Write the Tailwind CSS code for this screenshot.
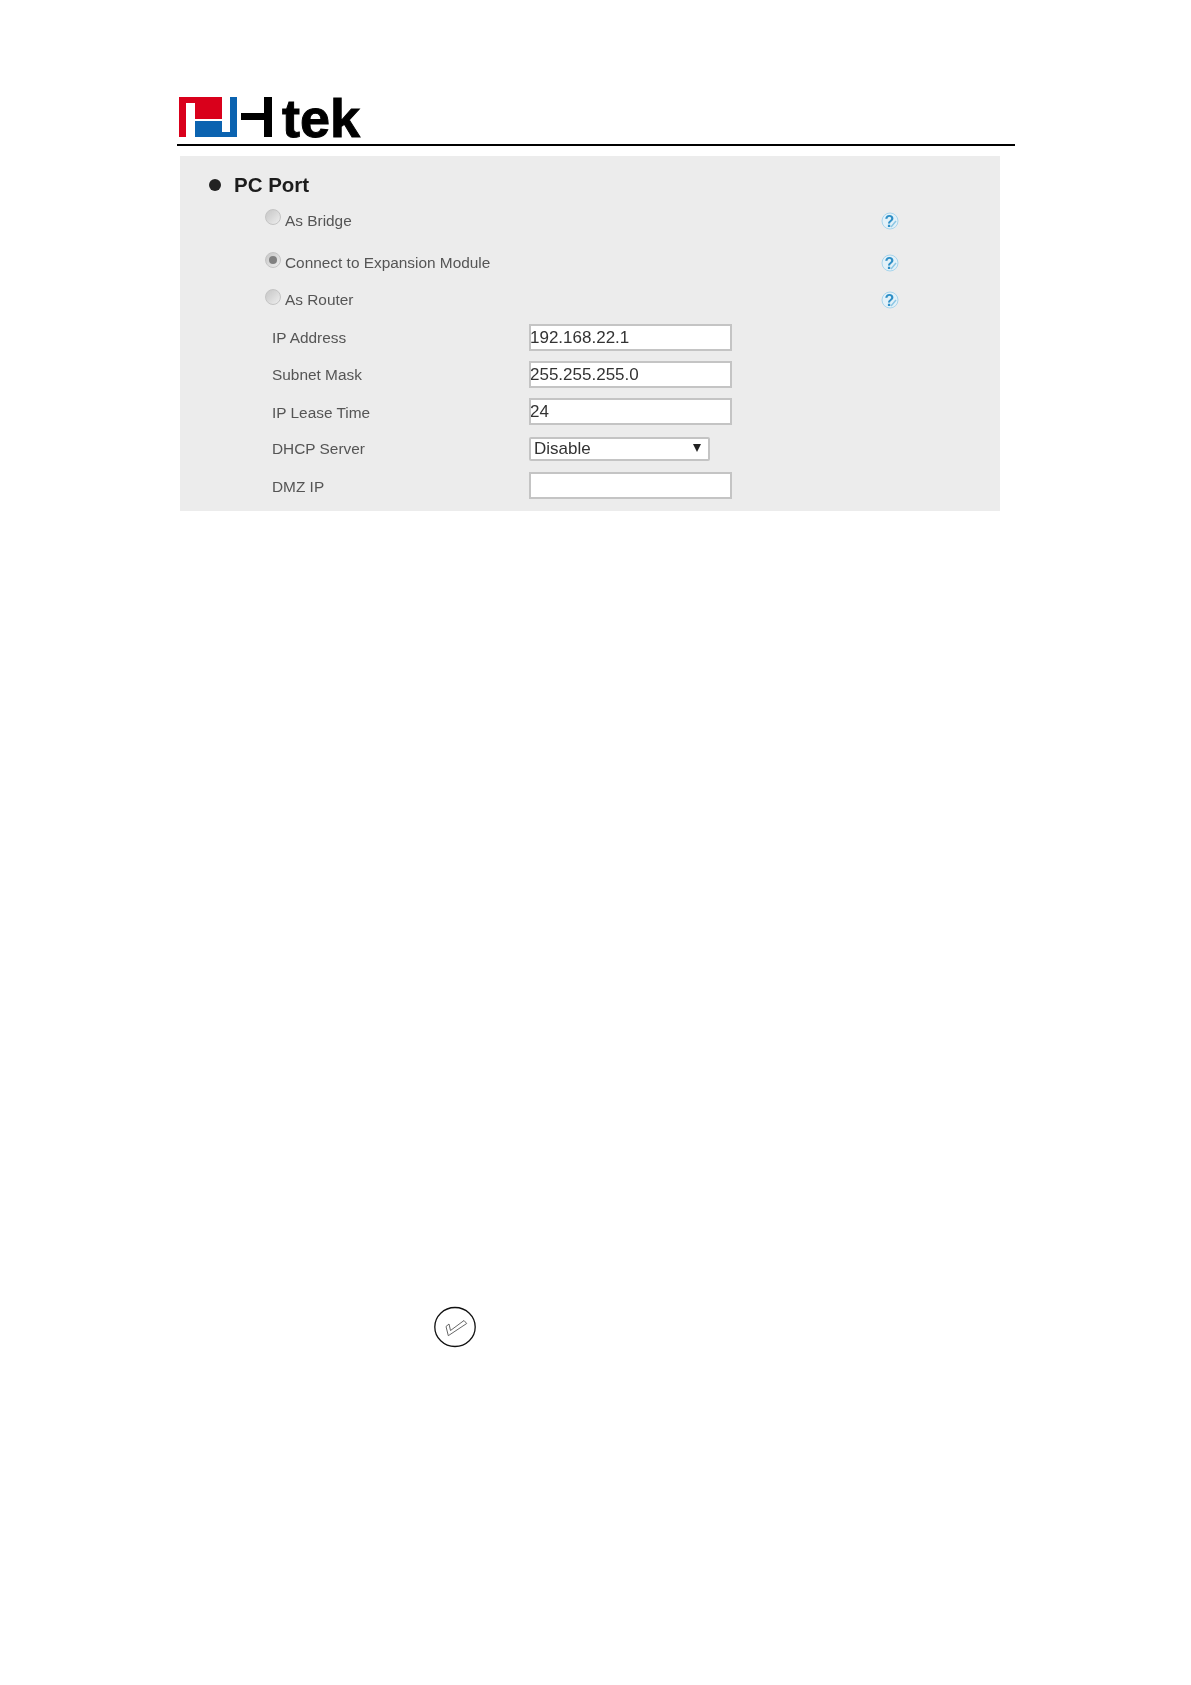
<!DOCTYPE html>
<html lang="en">
<head>
    <meta charset="UTF-8">
    <meta name="viewport" content="width=device-width, initial-scale=1.0">
    <title>Htek PC Port</title>
    <script src="https://cdn.jsdelivr.net/npm/@tailwindcss/browser@4"></script>
</head>
<body class="bg-white font-['Liberation_Sans',Arial,sans-serif] w-[1191px] h-[1685px] overflow-hidden">

    <!-- Logo -->
    <header class="ml-[177px] w-[838px] pt-[97px] border-b-2 border-black h-[146px]">
        <div class="flex items-start ml-[2px] h-[40px]">
            <svg width="93" height="40" viewBox="0 0 93 40">
                <path d="M0 0H43V22H16V6H7V40H0Z" fill="#d9001b"/>
                <path d="M16 24H43V35H51V0H58V40H16Z" fill="#0b63b0"/>
                <rect x="62" y="16" width="24" height="7" fill="#000"/>
                <rect x="85" y="0" width="8" height="40" fill="#000"/>
            </svg>
            <span class="ml-[10px] mt-[1px] font-bold text-[54px] leading-[40px] text-black [-webkit-text-stroke:1px_black]">tek</span>
        </div>
    </header>

    <!-- PC Port panel -->
    <section class="ml-[180px] mt-[10px] w-[820px] h-[355px] bg-[#ececec] pt-[7px] blur-[0.4px]">
        <div class="flex items-center h-[44px] pl-[29px]">
            <span class="w-[12px] h-[12px] rounded-full bg-[#222]"></span>
            <h2 class="ml-[13px] text-[20.5px] font-bold text-[#1c1c1c]">PC Port</h2>
        </div>

        <div class="flex items-center h-[26px] pl-[85px] text-[15.4px] text-[#555]">
            <span class="w-[16px] h-[16px] rounded-full border border-[#c4c4c4] bg-linear-to-br from-[#c6c6c6] to-[#eeeeee] mb-[6px]"></span>
            <span class="ml-[4px] w-[596px] pt-[2px]">As Bridge</span>
            <svg class="mt-[1px]" width="18" height="18" viewBox="0 0 18 18"><circle cx="9" cy="9" r="8" fill="#e3f1f8" stroke="#a8d5ec"/><path d="M10 15L15 9" stroke="#8cc6e4" stroke-width="1.5" fill="none"/><text x="8.5" y="14.5" text-anchor="middle" font-size="16" font-weight="700" fill="#2f8fc6">?</text></svg>
        </div>

        <div class="flex items-center h-[28px] mt-[15px] pl-[85px] text-[15.4px] text-[#555]">
            <span class="flex items-center justify-center w-[16px] h-[16px] rounded-full border border-[#c4c4c4] bg-linear-to-br from-[#c6c6c6] to-[#eeeeee] mb-[5px]"><span class="w-[8px] h-[8px] rounded-full bg-[#808080]"></span></span>
            <span class="ml-[4px] w-[596px] pt-[2px]">Connect to Expansion Module</span>
            <svg class="mt-[1px]" width="18" height="18" viewBox="0 0 18 18"><circle cx="9" cy="9" r="8" fill="#e3f1f8" stroke="#a8d5ec"/><path d="M10 15L15 9" stroke="#8cc6e4" stroke-width="1.5" fill="none"/><text x="8.5" y="14.5" text-anchor="middle" font-size="16" font-weight="700" fill="#2f8fc6">?</text></svg>
        </div>

        <div class="flex items-center h-[28px] mt-[10px] pl-[85px] text-[15.4px] text-[#555]">
            <span class="w-[16px] h-[16px] rounded-full border border-[#c4c4c4] bg-linear-to-br from-[#c6c6c6] to-[#eeeeee] mb-[6px]"></span>
            <span class="ml-[4px] w-[596px]">As Router</span>
            <svg width="18" height="18" viewBox="0 0 18 18"><circle cx="9" cy="9" r="8" fill="#e3f1f8" stroke="#a8d5ec"/><path d="M10 15L15 9" stroke="#8cc6e4" stroke-width="1.5" fill="none"/><text x="8.5" y="14.5" text-anchor="middle" font-size="16" font-weight="700" fill="#2f8fc6">?</text></svg>
        </div>

        <div class="flex items-center mt-[10px] pl-[92px] text-[15.4px] text-[#555]">
            <label class="w-[257px]">IP Address</label>
            <input type="text" value="192.168.22.1" readonly class="w-[203px] h-[27px] border-2 border-[#c4c4c4] bg-white text-[17px] text-[#333] -indent-[1px]">
        </div>
        <div class="flex items-center mt-[10px] pl-[92px] text-[15.4px] text-[#555]">
            <label class="w-[257px] pt-[1px]">Subnet Mask</label>
            <input type="text" value="255.255.255.0" readonly class="w-[203px] h-[27px] border-2 border-[#c4c4c4] bg-white text-[17px] text-[#333] -indent-[1px]">
        </div>
        <div class="flex items-center mt-[10px] pl-[92px] text-[15.4px] text-[#555]">
            <label class="w-[257px] pt-[2px]">IP Lease Time</label>
            <input type="text" value="24" readonly class="w-[203px] h-[27px] border-2 border-[#c4c4c4] bg-white text-[17px] text-[#333] -indent-[1px]">
        </div>
        <div class="flex items-center mt-[12px] pl-[92px] text-[15.4px] text-[#555]">
            <label class="w-[257px]">DHCP Server</label>
            <div class="relative w-[181px] h-[24px]">
                <select class="appearance-none w-full h-full border-2 border-[#c4c4c4] rounded-[2px] bg-white pl-[3px] text-[17px] leading-[20px] text-[#333]">
                    <option>Disable</option>
                </select>
                <svg class="absolute right-[9px] top-[7px]" width="8" height="8" viewBox="0 0 8 8"><path d="M0 0H8L4 8Z" fill="#222"/></svg>
            </div>
        </div>
        <div class="flex items-center mt-[11px] pl-[92px] text-[15.4px] text-[#555]">
            <label class="w-[257px] pt-[2px]">DMZ IP</label>
            <input type="text" readonly class="w-[203px] h-[27px] border-2 border-[#c4c4c4] bg-white">
        </div>
    </section>

    <!-- Note icon -->
    <div class="ml-[434px] mt-[795px]">
        <svg width="42" height="42" viewBox="0 0 42 42">
            <ellipse cx="21" cy="21" rx="20.2" ry="19.5" fill="#fff" stroke="#111" stroke-width="1.3"/>
            <path d="M12 20.5L15 18L16.5 24.5L30 14.5L32.7 17.5L14.3 29.7Z" fill="#fff" stroke="#555" stroke-width="0.9" stroke-linejoin="round"/>
        </svg>
    </div>

</body>
</html>
